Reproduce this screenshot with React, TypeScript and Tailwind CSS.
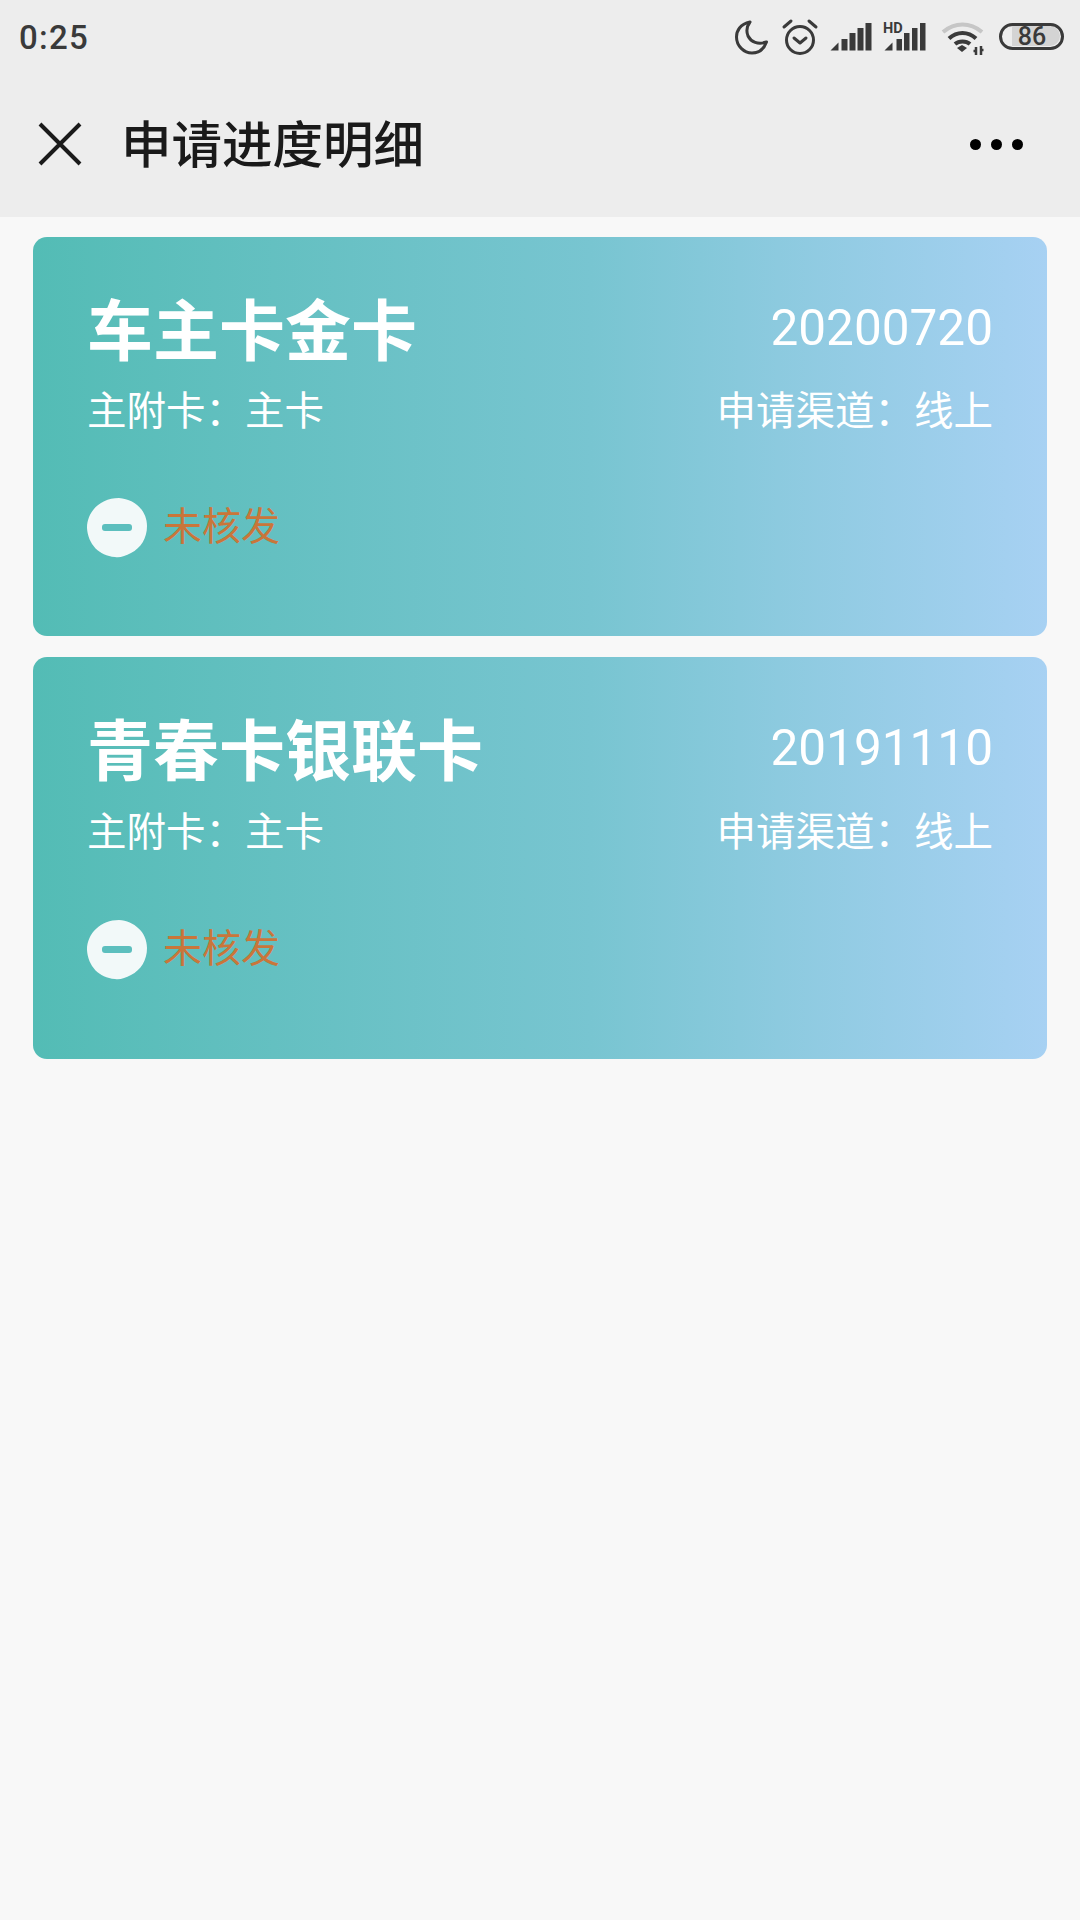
const cjk = "font-['Roboto','Noto_Sans_CJK_SC',sans-serif]";

function StatusIcons() {
  const c = "#3a3a3a";
  return (
    <svg width="340" height="44" viewBox="730 14 340 44" className="block">
      {/* moon */}
      <path d="M750 21 C740 23 736.500 30 736.500 36 C736.500 45 744 52 752 52 C759 52 764 48 766.500 41 C758 44 751 41 748 35 C746 30 747 25 750 21 Z" fill="none" stroke={c} strokeWidth="3" strokeLinejoin="round" />
      {/* alarm */}
      <circle cx="800" cy="39" r="13.500" fill="none" stroke={c} strokeWidth="3" />
      <path d="M794 37 L800 42 L806 37" fill="none" stroke={c} strokeWidth="3" strokeLinecap="round" strokeLinejoin="round" />
      <path d="M784 26 L791 20 M809 20 L816 26" fill="none" stroke={c} strokeWidth="3" strokeLinecap="round" />
      {/* signal 1 */}
      <path d="M830.500 49.500 L838.500 41.500 V49.500 Z" fill={c} />
      <rect x="841.500" y="38" width="6" height="11.500" fill={c} />
      <rect x="849.500" y="32" width="6" height="17.500" fill={c} />
      <rect x="857.500" y="27" width="6" height="22.500" fill={c} />
      <rect x="865.500" y="22" width="6" height="27.500" fill={c} />
      {/* HD signal */}
      <text x="883" y="32" fontSize="14.500" fontWeight="700" fill={c} fontFamily="Roboto, sans-serif">HD</text>
      <path d="M884.500 49.500 L892.500 41.500 V49.500 Z" fill={c} />
      <rect x="896.500" y="38" width="5.500" height="11.500" fill={c} />
      <rect x="904" y="32" width="5.500" height="17.500" fill={c} />
      <rect x="912" y="27" width="5.500" height="22.500" fill={c} />
      <rect x="920" y="22" width="5.500" height="27.500" fill={c} />
      {/* wifi */}
      <path d="M943 31 C 955 21 970 21 982 31" fill="none" stroke="#c6c6c6" strokeWidth="4" />
      <path d="M949 37.500 C 957 30 968 30 976 37.500" fill="none" stroke={c} strokeWidth="4" />
      <path d="M955 43 C 959 39.500 966 39.500 970 43" fill="none" stroke={c} strokeWidth="4" />
      <path d="M957 47 L962 44 L967 47 L962 51 Z" fill={c} />
      <path d="M976 54 V46 M973.500 50 H976 M981 45 V54 M981 49 H983.500" fill="none" stroke={c} strokeWidth="2.500" />
      {/* battery */}
      <path d="M1012 25 H1050 A10 10 0 0 1 1060 35 A10 10 0 0 1 1050 45 H1012 Z" fill="#d4d4d4" />
      <rect x="1000.500" y="23.500" width="62" height="24" rx="12" fill="none" stroke={c} strokeWidth="3" />
      <text x="1032" y="44" textAnchor="middle" fontSize="25" fontWeight="500" fill={c} fontFamily="Roboto, sans-serif">86</text>
    </svg>
  );
}

function MinusBadge() {
  return (
    <svg width="60" height="60" viewBox="0 0 60 60" className="block shrink-0">
      <path d="M32 0 C47 1 60 12 60 28 C60 40 54 50 44 55 C38 58 33 60 28 59 C12 58 1 46 0 30 C0 13 14 0 32 0 Z" fill="#f2f9f9" />
      <rect x="15" y="26" width="30" height="7" rx="3" fill="#5cbfbe" />
    </svg>
  );
}

function Card({ title, date, h, gap, subGap }: { title: string; date: string; h: string; gap: string; subGap: string }) {
  return (
    <div className={`${h} rounded-[14px] bg-linear-to-r from-[#53bcb5] via-[#78c5d1] via-55% to-[#a7d1f3] px-[54px] pt-[52px] text-white`}>
      <div className="flex items-center justify-between h-[88px]">
        <div className="text-[66px] font-bold leading-[88px]">{title}</div>
        <div className="text-[49.500px] leading-[88px] -mt-[10px] font-['Roboto',sans-serif]">{date}</div>
      </div>
      <div className={`flex items-center justify-between h-[52px] text-[39.500px] leading-[52px] ${subGap}`}>
        <div>主附卡：主卡</div>
        <div>申请渠道：线上</div>
      </div>
      <div className={`flex items-center gap-[16px] ${gap}`}>
        <MinusBadge />
        <div className="text-[39px] leading-[52px] text-[#c9763a] -mt-[2px]">未核发</div>
      </div>
    </div>
  );
}

export default function App() {
  return (
    <div className={`${cjk} w-[1080px] h-[1920px] bg-[#f8f8f8] flex flex-col overflow-hidden`}>
      <div className="h-[217px] bg-[#ededed] shrink-0 flex flex-col">
        <div className="h-[74px] flex items-center justify-between pl-[19px] pr-[10px]">
          <div className="text-[33px] font-medium tracking-[1.3px] text-[#3a3a3a] leading-none font-['Roboto',sans-serif]">0:25</div>
          <StatusIcons />
        </div>
        <div className="flex-1 flex items-center pl-[38px] pr-[57px]">
          <svg width="44" height="44" viewBox="0 0 44 44" className="block shrink-0 mt-[-4px]">
            <path d="M2 2 L42 42 M42 2 L2 42" stroke="#1a1a1a" strokeWidth="4" fill="none" />
          </svg>
          <div className="ml-[39px] text-[50.500px] font-medium text-[#1a1a1a] leading-none mt-[2px]">申请进度明细</div>
          <div className="ml-auto flex gap-[10px] mt-[-2px]">
            <span className="w-[11px] h-[11px] rounded-full bg-black" />
            <span className="w-[11px] h-[11px] rounded-full bg-black" />
            <span className="w-[11px] h-[11px] rounded-full bg-black" />
          </div>
        </div>
      </div>
      <div className="px-[33px] pt-[20px] flex flex-col gap-[21px]">
        <Card title="车主卡金卡" date="20200720" h="h-[399px]" subGap="mt-[9px]" gap="mt-[60px]" />
        <Card title="青春卡银联卡" date="20191110" h="h-[402px]" subGap="mt-[10px]" gap="mt-[61px]" />
      </div>
    </div>
  );
}
